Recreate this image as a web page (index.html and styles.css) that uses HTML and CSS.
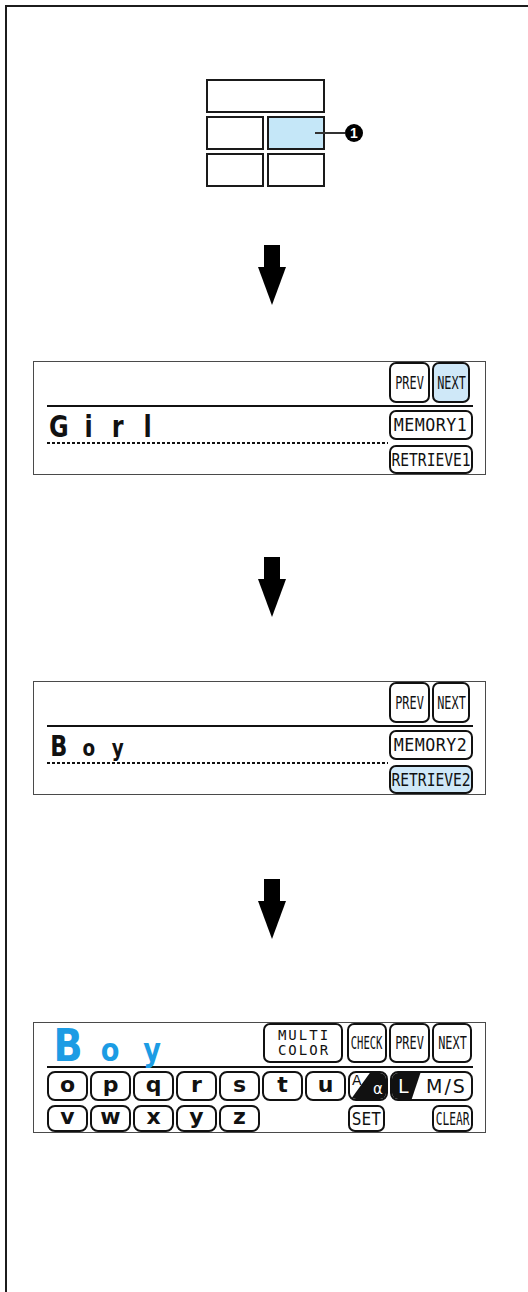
FILE: index.html
```html
<!DOCTYPE html>
<html>
<head>
  <title>Memory / Retrieve</title>
  <link rel="stylesheet" href="styles.css">
</head>
<body>

  <div class="page">

    <div class="layout">
      <div class="layout-grid">
        <div class="cell wide"></div>
        <div class="cell"></div>
        <div class="cell active"></div>
        <div class="cell"></div>
        <div class="cell"></div>
      </div>
      <span class="leader"></span>
      <span class="callout">1</span>
    </div>

    <svg class="arrow first" width="28" height="60" viewBox="0 0 28 60">
      <rect x="6" y="0" width="16" height="23" fill="#000"/>
      <polygon points="0,22 28,22 14,60" fill="#000"/>
    </svg>

    <div class="panel step">
      <div class="panel-head">
        <div class="btn prev"><span class="lbl">PREV</span></div>
        <div class="btn next on"><span class="lbl">NEXT</span></div>
      </div>
      <div class="rule"></div>
      <div class="panel-body">
        <div class="field">
          <div class="entry"><span class="ch">G</span><span class="ch">i</span><span class="ch">r</span><span class="ch">l</span></div>
          <div class="dots"></div>
        </div>
        <div class="side">
          <div class="btn mem"><span class="lbl">MEMORY1</span></div>
          <div class="btn ret"><span class="lbl">RETRIEVE1</span></div>
        </div>
      </div>
    </div>

    <svg class="arrow second" width="28" height="60" viewBox="0 0 28 60">
      <rect x="6" y="0" width="16" height="23" fill="#000"/>
      <polygon points="0,22 28,22 14,60" fill="#000"/>
    </svg>

    <div class="panel step2">
      <div class="panel-head">
        <div class="btn prev"><span class="lbl">PREV</span></div>
        <div class="btn next"><span class="lbl">NEXT</span></div>
      </div>
      <div class="rule"></div>
      <div class="panel-body">
        <div class="field">
          <div class="entry small"><span class="ch">B</span><span class="ch lc">o</span><span class="ch lc">y</span></div>
          <div class="dots"></div>
        </div>
        <div class="side">
          <div class="btn mem"><span class="lbl">MEMORY2</span></div>
          <div class="btn ret on"><span class="lbl">RETRIEVE2</span></div>
        </div>
      </div>
    </div>

    <svg class="arrow third" width="28" height="60" viewBox="0 0 28 60">
      <rect x="6" y="0" width="16" height="23" fill="#000"/>
      <polygon points="0,22 28,22 14,60" fill="#000"/>
    </svg>

    <div class="panel keyboard">
      <div class="kb-head">
        <div class="big"><span class="ch">B</span><span class="ch lc">o</span><span class="ch lc">y</span></div>
        <div class="btn multi"><span>MULTI</span><span>COLOR</span></div>
        <div class="btn check"><span class="lbl">CHECK</span></div>
        <div class="btn prev"><span class="lbl">PREV</span></div>
        <div class="btn next"><span class="lbl">NEXT</span></div>
      </div>
      <div class="rule"></div>
      <div class="keys">
        <div class="key">o</div>
        <div class="key">p</div>
        <div class="key">q</div>
        <div class="key">r</div>
        <div class="key">s</div>
        <div class="key">t</div>
        <div class="key">u</div>
        <div class="key case"><span class="case-a">A</span><span class="case-b">α</span></div>
        <div class="key size"><span class="size-l">L</span><span class="size-ms">M/S</span></div>
        <div class="key">v</div>
        <div class="key">w</div>
        <div class="key">x</div>
        <div class="key">y</div>
        <div class="key">z</div>
        <div class="btn set"><span class="lbl">SET</span></div>
        <div class="btn clear"><span class="lbl">CLEAR</span></div>
      </div>
    </div>

  </div>

</body>
</html>
```

FILE: styles.css
```css
body {
  margin: 0;
  background-color: #fff;
  font-family: "Liberation Sans", Arial, sans-serif;
  color: #111;
  overflow: hidden;
}

.page {
  margin: 5px 0 0 5px;
  height: 1287px;
  box-sizing: border-box;
  border-top: 2px solid #1c1c1c;
  border-left: 2px solid #1c1c1c;
}

/* screen layout sketch */

.layout {
  position: relative;
  width: 119px;
  margin: 72px 0 0 199px;
}

.layout-grid {
  display: grid;
  grid-template-columns: 58px 58px;
  grid-template-rows: 34px 34px 34px;
  gap: 3px;
}

.cell {
  border: 2px solid #1a1a1a;
  background-color: #fff;
}

.cell.wide {
  grid-column: span 2;
}

.cell.active {
  background-color: #c5e7f8;
}

.leader {
  position: absolute;
  left: 109px;
  top: 53px;
  width: 30px;
  height: 2px;
  background-color: #333;
}

.callout {
  position: absolute;
  left: 139px;
  top: 45px;
  width: 18px;
  height: 18px;
  border-radius: 50%;
  background-color: #000;
  color: #fff;
  font-size: 14px;
  font-weight: bold;
  line-height: 18px;
  text-align: center;
}

/* arrows */

.arrow {
  display: block;
  margin-left: 251px;
}

.arrow.first {
  margin-top: 58px;
}

.arrow.second {
  margin-top: 82px;
}

.arrow.third {
  margin-top: 84px;
}

/* panels */

.panel {
  width: 453px;
  margin-left: 26px;
  box-sizing: border-box;
  border: 1px solid #4a4a4a;
  padding: 0 12px 0 13px;
}

.panel.step {
  margin-top: 56px;
}

.panel.step2 {
  margin-top: 64px;
}

.panel.keyboard {
  margin-top: 83px;
}

.panel-head {
  display: flex;
  justify-content: flex-end;
  gap: 2px;
  height: 41px;
  padding-right: 3px;
}

.rule {
  height: 2px;
  margin-top: 2px;
  background-color: #111;
}

.panel-body {
  display: flex;
  gap: 1px;
}

.field {
  flex: 1;
  padding-top: 5px;
}

.entry {
  display: flex;
  align-items: baseline;
  height: 30px;
  margin-left: -3px;
  font-family: "DejaVu Sans", sans-serif;
  font-size: 30px;
  font-weight: bold;
  line-height: 30px;
  color: #111;
}

.entry.small {
  font-size: 28px;
}

.entry.small .lc {
  font-size: 23px;
}

.ch {
  display: inline-block;
  text-align: center;
  transform: scaleX(0.8);
}

.entry .ch {
  width: 29.5px;
}

.dots {
  height: 2px;
  background-image: repeating-linear-gradient(to right, #111 0, #111 3px, transparent 3px, transparent 5px);
}

.side {
  width: 84px;
  display: flex;
  flex-direction: column;
  gap: 5px;
  padding-top: 3px;
}

/* buttons */

.btn {
  display: flex;
  align-items: center;
  justify-content: center;
  box-sizing: border-box;
  border: 2px solid #111;
  border-radius: 7px;
  background-color: #fff;
  font-family: "DejaVu Sans Mono", monospace;
  font-size: 17px;
  white-space: nowrap;
  overflow: hidden;
}

.btn.on {
  background-color: #cfe8f8;
}

.lbl {
  display: inline-block;
  transform: scaleX(0.7);
}

.btn.prev {
  width: 41px;
}

.btn.next {
  width: 38px;
}

.btn.mem {
  height: 30px;
}

.btn.mem .lbl {
  transform: scaleX(0.98);
  letter-spacing: 0.5px;
}

.btn.ret {
  height: 29px;
}

.btn.ret .lbl {
  transform: scaleX(0.86);
}

/* keyboard panel */

.kb-head {
  display: flex;
  height: 40px;
  padding-right: 1px;
}

.kb-head .btn {
  margin-left: 2px;
}

.kb-head .btn.next {
  width: 40px;
}

.big {
  flex: 1;
  display: flex;
  align-items: baseline;
  height: 40px;
  box-sizing: border-box;
  padding-top: 3px;
  font-family: "DejaVu Sans", sans-serif;
  font-size: 45px;
  font-weight: bold;
  line-height: 40px;
  color: #1c9ce4;
}

.big .ch {
  width: 42px;
  transform: scaleX(0.85);
}

.big .lc {
  font-size: 32px;
}

.btn.multi {
  width: 80px;
  flex-direction: column;
  font-size: 14px;
  line-height: 15px;
  letter-spacing: 2px;
  padding-left: 2px;
}

.kb-head .btn.check {
  width: 40px;
  margin-left: 4px;
}

.btn.check .lbl {
  transform: scaleX(0.62);
}

.kb-head + .rule {
  margin-top: 3px;
}

.keys {
  display: grid;
  grid-template-columns: repeat(7, 41px) 40px 83px;
  grid-template-rows: 30px 27px;
  column-gap: 2px;
  row-gap: 4px;
  margin-top: 3px;
}

.key {
  display: flex;
  align-items: center;
  justify-content: center;
  box-sizing: border-box;
  border: 2px solid #111;
  border-radius: 8px;
  font-family: "DejaVu Sans", sans-serif;
  font-size: 22px;
  font-weight: bold;
  line-height: 1;
  padding-bottom: 3px;
}

.btn.set {
  grid-column: 8;
  width: 37px;
}

.btn.set .lbl {
  transform: scaleX(0.95);
}

.btn.clear {
  grid-column: 9;
  justify-self: end;
  width: 41px;
}

.btn.clear .lbl {
  transform: scaleX(0.66);
}

.key.case,
.key.size {
  position: relative;
  overflow: hidden;
  font-weight: normal;
  padding: 0;
}

.key.case::before,
.key.size::before {
  content: "";
  position: absolute;
  top: 0;
  left: 0;
  right: 0;
  bottom: 0;
  background-color: #111;
}

.key.case::before {
  clip-path: polygon(55% 0, 100% 0, 100% 100%, 3% 100%);
}

.key.case {
  justify-content: space-between;
  padding: 0 3px 0 2px;
}

.case-a,
.case-b,
.size-l,
.size-ms {
  position: relative;
}

.case-a {
  align-self: flex-start;
  font-size: 14px;
}

.case-b {
  align-self: flex-end;
  font-size: 15px;
  color: #fff;
  margin-bottom: 2px;
}

.key.size::before {
  clip-path: polygon(0 0, 36% 0, 25% 100%, 0 100%);
}

.key.size {
  justify-content: flex-start;
  font-size: 19px;
}

.size-l {
  color: #fff;
  margin-left: 6px;
  width: 28px;
}

.size-ms {
  letter-spacing: 2px;
}
```
